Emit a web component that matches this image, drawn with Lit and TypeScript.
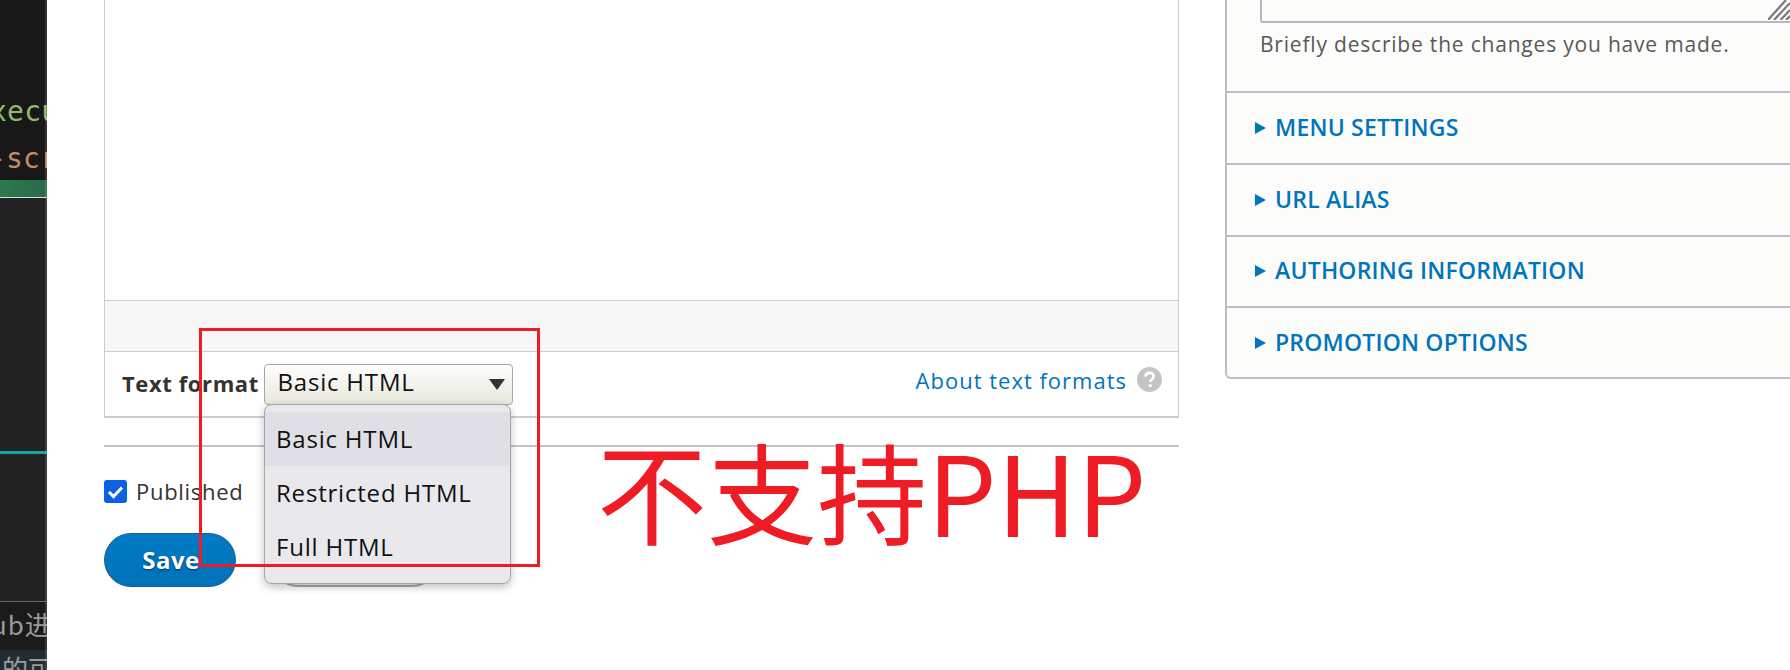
// app.ts
import { css, html, LitElement } from 'lit';
import { customElement } from 'lit/decorators.js';

const SECTIONS = ['Menu settings', 'URL alias', 'Authoring information', 'Promotion options'];
const FORMATS = ['Basic HTML', 'Restricted HTML', 'Full HTML'];

@customElement('app-root')
export class AppRoot extends LitElement {
  static styles = css`
    :host {
      display: flex;
      position: relative;
      width: 1790px;
      height: 670px;
      overflow: hidden;
      background: #fff;
      color: #333;
      font-family: 'Open Sans', 'Noto Sans', sans-serif;
      font-size: 22px;
    }

    /* editor window peeking in on the left */
    .term {
      flex: none;
      position: relative;
      width: 47px;
      height: 670px;
      display: flex;
      flex-direction: column;
      overflow: hidden;
      background: #222;
      font-family: 'DejaVu Sans Mono', monospace;
      font-size: 28px;
      white-space: nowrap;
    }
    .term::after {
      content: '';
      position: absolute;
      top: 0;
      right: 0;
      bottom: 0;
      width: 2px;
      background: rgba(255, 255, 255, 0.12);
    }
    .term > div { flex: none; }
    .term-top {
      height: 180px;
      background: #181818;
      box-sizing: border-box;
      padding-top: 88px;
      line-height: 47px;
    }
    .green { color: #8dbb6c; margin-left: -27px; letter-spacing: 0.2px; }
    .orange { color: #c98a5c; margin-left: -11px; letter-spacing: 0.2px; }
    .status {
      height: 17px;
      background: linear-gradient(90deg, #2d7a4d, #2a6a4a);
      border-bottom: 1px solid #ddd;
    }
    .term-mid { height: 253px; background: #232323; }
    .teal { height: 3px; background: #14a89e; }
    .term-low {
      height: 147px;
      background: #232323;
      border-bottom: 1px solid #666;
    }
    .term-foot {
      height: 48px;
      background: #1b1b1b;
      color: #9a9a9a;
      font-family: 'Noto Sans CJK SC', sans-serif;
      font-size: 26px;
      line-height: 44px;
    }
    .term-foot span { display: block; margin-left: -9px; letter-spacing: 1px; }
    .term-last {
      height: 22px;
      overflow: hidden;
      background: #252c31;
      color: #9a9a9a;
      font-family: 'Noto Sans CJK SC', sans-serif;
      font-size: 26px;
      line-height: 36px;
      padding-left: 2px;
    }

    .main {
      flex: none;
      width: 1075px;
      margin-left: 57px;
    }
    .editor {
      box-sizing: border-box;
      border: solid #ccc;
      border-width: 0 1.5px 2px;
    }
    .canvas { height: 300px; }
    .toolbar {
      height: 50px;
      background: #f7f7f7;
      border: solid #ccc;
      border-width: 1px 0;
    }
    .format-row {
      height: 64px;
      box-sizing: border-box;
      display: flex;
      align-items: center;
      padding: 0 16px 0 17px;
    }
    .format-label {
      font-weight: 700;
      width: 141.500px;
      flex: none;
      margin-top: -2px;
      letter-spacing: 0.6px;
      white-space: nowrap;
    }
    .select {
      flex: none;
      box-sizing: border-box;
      width: 249px;
      height: 41px;
      display: flex;
      align-items: center;
      justify-content: space-between;
      padding: 0 7px 5px 13px;
      border: 1px solid #a6a6a6;
      border-radius: 4px;
      background: linear-gradient(#fefefe, #e8e8dc);
      color: #111;
      font-size: 24px;
      letter-spacing: 0.8px;
    }
    .arrow {
      width: 0;
      height: 0;
      margin-top: 5px;
      border: solid transparent;
      border-width: 11px 8px 0;
      border-top-color: #333;
    }
    .about {
      margin: -9px 0 0 auto;
      display: flex;
      align-items: center;
      gap: 10px;
      color: #0074bd;
      letter-spacing: 1px;
    }
    .help {
      display: block;
      width: 25px;
      height: 25px;
      margin-top: -1px;
    }
    hr {
      margin: 27px 0 0;
      border: 0;
      border-top: 2px solid #c4c4c4;
    }
    .published {
      display: flex;
      align-items: center;
      gap: 9px;
      margin-top: 32px;
      height: 24px;
      letter-spacing: 0.7px;
    }
    .check { display: block; width: 23px; height: 23px; }
    .actions {
      display: flex;
      gap: 35px;
      margin-top: 30px;
    }
    .btn {
      box-sizing: border-box;
      height: 54px;
      border-radius: 27px;
      display: flex;
      align-items: center;
      justify-content: center;
      padding-bottom: 2px;
      font-weight: 700;
    }
    .save {
      width: 132px;
      padding-left: 2px;
      background: linear-gradient(#007bc6, #0071b8);
      border: 1px solid #1e5c90;
      color: #fff;
      font-size: 24px;
      letter-spacing: 0.5px;
      text-shadow: 0 1px 2px rgba(0, 0, 0, 0.5);
    }
    .preview {
      width: 168px;
      background: #f2f1eb;
      border: 2px solid #a6a6a6;
    }

    /* sidebar panel running off the right edge */
    .side {
      flex: none;
      box-sizing: border-box;
      width: 565px;
      height: 379px;
      margin-left: 46px;
      background: #fcfcfa;
      border: solid #bebebe;
      border-width: 0 0 2px 2px;
      border-bottom-left-radius: 6px;
    }
    .revision {
      height: 91px;
      box-sizing: border-box;
      padding-left: 33px;
    }
    .textarea {
      position: relative;
      height: 23px;
      box-sizing: border-box;
      margin-right: -4px;
      border: solid #b8b8b8;
      border-width: 0 0 2px 2px;
      border-bottom-left-radius: 3px;
    }
    .grip {
      display: block;
      position: absolute;
      right: 4px;
      top: 0;
      width: 22px;
      height: 20px;
    }
    .hint {
      margin-top: 6px;
      color: #595959;
      font-size: 21px;
      line-height: 30px;
      letter-spacing: 0.8px;
      white-space: nowrap;
    }
    .section {
      height: 71.75px;
      box-sizing: border-box;
      border-top: 2px solid #bebebe;
      display: flex;
      align-items: center;
      padding: 0 0 2px 28px;
      gap: 9px;
      color: #0074bd;
      font-size: 23px;
      font-weight: 600;
      letter-spacing: 0.2px;
      text-transform: uppercase;
    }
    .tri {
      width: 0;
      height: 0;
      margin-top: 2px;
      border: solid transparent;
      border-width: 6px 0 6px 11px;
      border-left-color: #0074bd;
    }

    /* the select popup, open above the page */
    .menu {
      position: absolute;
      left: 264px;
      top: 404px;
      box-sizing: border-box;
      width: 247px;
      height: 180px;
      padding: 7px 0;
      background: #e9e8ed;
      border: 1px solid #a6a6a6;
      border-radius: 8px;
      box-shadow: 0 3px 8px rgba(0, 0, 0, 0.25);
      color: #111;
      font-size: 24px;
      letter-spacing: 0.8px;
    }
    .menu div {
      height: 54px;
      line-height: 54px;
      padding-left: 11px;
    }
    .menu .on { background: #e0dfe5; }

    /* annotation painted on the screenshot */
    .mark {
      position: absolute;
      left: 199px;
      top: 328px;
      box-sizing: border-box;
      width: 341px;
      height: 239px;
      border: 3px solid #ee1c25;
    }
    .note {
      position: absolute;
      left: 597px;
      top: 414px;
      color: #ee1c25;
      font-family: 'Noto Sans CJK SC', sans-serif;
      font-size: 110px;
      line-height: 150px;
      white-space: nowrap;
    }
  `;

  render() {
    return html`
      <div class="term">
        <div class="term-top">
          <div class="green">execute</div>
          <div class="orange">-script</div>
        </div>
        <div class="status"></div>
        <div class="term-mid"></div>
        <div class="teal"></div>
        <div class="term-low"></div>
        <div class="term-foot"><span>ub进</span></div>
        <div class="term-last">的可</div>
      </div>

      <div class="main">
        <div class="editor">
          <div class="canvas"></div>
          <div class="toolbar"></div>
          <div class="format-row">
            <span class="format-label">Text format</span>
            <div class="select">Basic HTML<span class="arrow"></span></div>
            <a class="about">
              About text formats
              <svg class="help" viewBox="0 0 25 25">
                <circle cx="12.5" cy="12.5" r="12.5" fill="#c4c4c4" />
                <path d="M8.5 9.6c.2-2.4 1.9-3.7 4.1-3.7 2.3 0 4 1.3 4 3.4 0 1.6-.9 2.4-2 3.2-1 .7-1.3 1.2-1.3 2.3" fill="none" stroke="#fff" stroke-width="2.6" />
                <circle cx="13.2" cy="18.6" r="1.7" fill="#fff" />
              </svg>
            </a>
          </div>
        </div>
        <hr />
        <label class="published">
          <svg class="check" viewBox="0 0 23 23">
            <rect width="23" height="23" rx="3" fill="#0b62e0" />
            <path d="M5 12l4.5 4.5L18 7.5" fill="none" stroke="#fff" stroke-width="3" />
          </svg>
          Published
        </label>
        <div class="actions">
          <div class="btn save">Save</div>
          <div class="btn preview">Preview</div>
        </div>
      </div>

      <aside class="side">
        <div class="revision">
          <div class="textarea">
            <svg class="grip" viewBox="0 0 22 20">
              <path d="M0 20L18 0M6 20L22 3M12.500 20L22 10M18 20L22 16" stroke="#777" stroke-width="2.2" fill="none" />
            </svg>
          </div>
          <div class="hint">Briefly describe the changes you have made.</div>
        </div>
        ${SECTIONS.map((s) => html`<div class="section"><span class="tri"></span>${s}</div>`)}
      </aside>

      <div class="menu">
        ${FORMATS.map((f, i) => html`<div class=${i === 0 ? 'on' : ''}>${f}</div>`)}
      </div>
      <div class="mark"></div>
      <div class="note">不支持PHP</div>
    `;
  }
}
